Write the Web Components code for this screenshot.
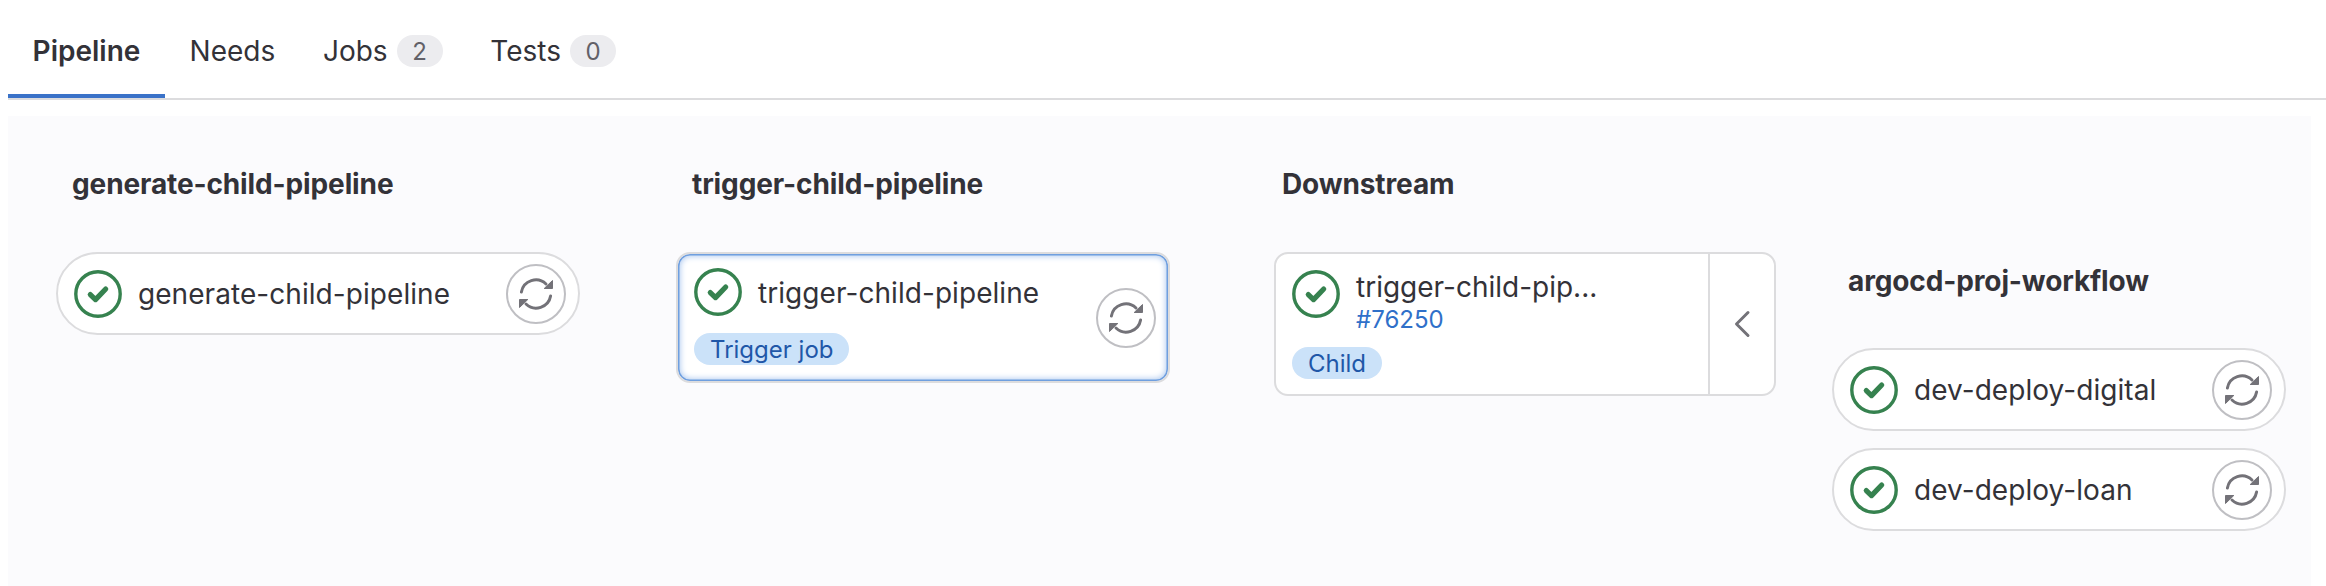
<!DOCTYPE html>
<html lang="en">
<head>
<meta charset="utf-8">
<title>Pipeline</title>
<style>
  html, body { margin: 0; background: #fff; }
  body { font-family: Inter, "Noto Sans", sans-serif; color: #333238; height: 586px; overflow: hidden; }
</style>
</head>
<body>
<pipeline-tabs>
  <tab-item active>Pipeline</tab-item>
  <tab-item>Needs</tab-item>
  <tab-item count="2">Jobs</tab-item>
  <tab-item count="0">Tests</tab-item>
</pipeline-tabs>
<pipeline-graph>
  <stage-column title="generate-child-pipeline" style="--col-width:524px">
    <job-pill>generate-child-pipeline</job-pill>
  </stage-column>
  <stage-column title="trigger-child-pipeline" style="--col-width:494px;--col-gap:96px">
    <trigger-card label="Trigger job">trigger-child-pipeline</trigger-card>
  </stage-column>
  <stage-column title="Downstream" style="--col-width:502px;--col-gap:104px;--title-indent:8px">
    <downstream-card pipeline="#76250" label="Child">trigger-child-pip...</downstream-card>
  </stage-column>
  <stage-column title="argocd-proj-workflow" style="--col-width:454px;--col-gap:56px;--col-top:97px;--title-gap:49px">
    <job-pill>dev-deploy-digital</job-pill>
    <job-pill>dev-deploy-loan</job-pill>
  </stage-column>
</pipeline-graph>

<script>
class PipelineTabs extends HTMLElement {
  constructor() {
    super();
    this.attachShadow({ mode: 'open' });
    this.shadowRoot.innerHTML = `
      <style>
        :host {
          display: flex;
          height: 98px;
          margin: 0 0 16px 8px;
          border-bottom: 2px solid #dcdcde;
        }
      </style>
      <slot></slot>
    `;
  }
}

class TabItem extends HTMLElement {
  constructor() {
    super();
    this.attachShadow({ mode: 'open' });
  }

  connectedCallback() {
    const count = this.getAttribute('count');
    this.shadowRoot.innerHTML = `
      <style>
        :host {
          display: flex;
          align-items: center;
          gap: 9px;
          box-sizing: border-box;
          height: 98px;
          padding: 4px 23.1px 0 24.6px;
          font-size: 28px;
          color: #333238;
        }
        :host([active]) {
          padding-right: 24.6px;
          font-weight: 600;
          box-shadow: inset 0 -4px 0 #3a72c8;
        }
        .count {
          display: flex;
          align-items: center;
          justify-content: center;
          width: 46px;
          height: 32px;
          border-radius: 16px;
          background: #ececef;
          color: #626168;
          font-size: 24px;
        }
      </style>
      <slot></slot>
      ${count !== null ? `<span class="count">${count}</span>` : ''}
    `;
  }
}

class PipelineGraph extends HTMLElement {
  constructor() {
    super();
    this.attachShadow({ mode: 'open' });
    this.shadowRoot.innerHTML = `
      <style>
        :host {
          display: flex;
          align-items: flex-start;
          box-sizing: border-box;
          height: 470px;
          margin: 0 15px 0 8px;
          padding: 50px 0 0 48px;
          background: #fbfbfd;
        }
      </style>
      <slot></slot>
    `;
  }
}

class StageColumn extends HTMLElement {
  constructor() {
    super();
    this.attachShadow({ mode: 'open' });
  }

  connectedCallback() {
    this.shadowRoot.innerHTML = `
      <style>
        :host {
          display: flex;
          flex-direction: column;
          flex: none;
          width: var(--col-width);
          margin-left: var(--col-gap, 0);
          margin-top: var(--col-top, 0);
        }
        h3 {
          margin: 0 0 var(--title-gap, 50px);
          padding-left: var(--title-indent, 16px);
          font-size: 28px;
          line-height: 36px;
          font-weight: 700;
          letter-spacing: -0.12px;
          color: #333238;
          white-space: nowrap;
        }
        .jobs { display: flex; flex-direction: column; gap: 17px; }
      </style>
      <h3>${this.getAttribute('title')}</h3>
      <div class="jobs"><slot></slot></div>
    `;
  }
}

class StatusIcon extends HTMLElement {
  constructor() {
    super();
    this.attachShadow({ mode: 'open' });
    this.shadowRoot.innerHTML = `
      <style>
        :host { display: block; flex: none; width: 48px; height: 48px; }
        svg { display: block; }
      </style>
      <svg width="48" height="48" viewBox="0 0 48 48" fill="none">
        <circle cx="24" cy="24" r="22.2" stroke="#36824f" stroke-width="3.4"/>
        <path d="M16.3 24.6l5.2 5 10.2-10.6" stroke="#36824f" stroke-width="5.2" stroke-linecap="round" stroke-linejoin="round"/>
      </svg>
    `;
  }
}

class RetryButton extends HTMLElement {
  constructor() {
    super();
    this.attachShadow({ mode: 'open' });
    this.shadowRoot.innerHTML = `
      <style>
        :host {
          display: flex;
          align-items: center;
          justify-content: center;
          flex: none;
          box-sizing: border-box;
          width: 60px;
          height: 60px;
          border: 2px solid #bfbfc3;
          border-radius: 50%;
          background: #fff;
        }
        svg { display: block; }
      </style>
      <svg width="36" height="36" viewBox="-18 -18 36 36" fill="#737278">
        <path d="M-14.6 -2A14.7 14.7 0 0 1 10 -10M14.6 2A14.7 14.7 0 0 1 -10 10" fill="none" stroke="#737278" stroke-width="3" stroke-linecap="round"/>
        <path d="M16.5 -13.5V-5.5H8.2ZM-16.5 13.5V5.5H-8.2Z" stroke="#737278" stroke-width="1" stroke-linejoin="round"/>
      </svg>
    `;
  }
}

class LabelBadge extends HTMLElement {
  constructor() {
    super();
    this.attachShadow({ mode: 'open' });
    this.shadowRoot.innerHTML = `
      <style>
        :host {
          display: inline-flex;
          align-items: center;
          align-self: flex-start;
          box-sizing: border-box;
          height: 32px;
          padding: 0 16px;
          border-radius: 16px;
          background: #cbe2f9;
          color: #1f57a8;
          font-size: 24px;
          white-space: nowrap;
        }
      </style>
      <slot></slot>
    `;
  }
}

class JobPill extends HTMLElement {
  constructor() {
    super();
    this.attachShadow({ mode: 'open' });
    this.shadowRoot.innerHTML = `
      <style>
        :host {
          display: flex;
          align-items: center;
          box-sizing: border-box;
          height: 83px;
          padding: 0 12px 0 16px;
          border: 2px solid #dcdcde;
          border-radius: 42px;
          background: #fff;
          font-size: 28px;
          letter-spacing: 0.06px;
          color: #333238;
        }
        .name { flex: 1; margin-left: 16px; white-space: nowrap; }
      </style>
      <status-icon></status-icon>
      <span class="name"><slot></slot></span>
      <retry-button></retry-button>
    `;
  }
}

class TriggerCard extends HTMLElement {
  constructor() {
    super();
    this.attachShadow({ mode: 'open' });
  }

  connectedCallback() {
    this.shadowRoot.innerHTML = `
      <style>
        :host {
          display: flex;
          align-items: flex-end;
          box-sizing: border-box;
          height: 131px;
          padding: 0 12px 33px 16px;
          border: 2px solid #dcdcde;
          border-radius: 14px;
          background: #fff;
          box-shadow: inset 0 0 0 1.5px #6f9fdf, inset 0 0 6px 2px #a9c6ee;
          font-size: 28px;
          letter-spacing: 0.06px;
          color: #333238;
        }
        .main { flex: 1; display: flex; flex-direction: column; gap: 17px; margin-bottom: -17px; }
        .top { display: flex; align-items: center; gap: 16px; white-space: nowrap; }
        .name { padding-top: 2px; }
        label-badge { letter-spacing: 0; }
      </style>
      <div class="main">
        <div class="top"><status-icon></status-icon><span class="name"><slot></slot></span></div>
        <label-badge>${this.getAttribute('label')}</label-badge>
      </div>
      <retry-button></retry-button>
    `;
  }
}

class DownstreamCard extends HTMLElement {
  constructor() {
    super();
    this.attachShadow({ mode: 'open' });
  }

  connectedCallback() {
    this.shadowRoot.innerHTML = `
      <style>
        :host {
          display: flex;
          box-sizing: border-box;
          height: 144px;
          border: 2px solid #dcdcde;
          border-radius: 14px;
          background: #fff;
          font-size: 28px;
          color: #333238;
        }
        .main {
          flex: 1;
          display: flex;
          flex-direction: column;
          gap: 11px;
          padding: 16px 16px 0;
        }
        .top { display: flex; align-items: flex-start; gap: 16px; white-space: nowrap; }
        .names { display: flex; flex-direction: column; }
        .title { line-height: 34px; }
        a { color: #2f70c9; font-size: 24px; line-height: 32px; text-decoration: none; }
        .toggle {
          display: flex;
          align-items: center;
          justify-content: center;
          width: 64px;
          border-left: 2px solid #dcdcde;
        }
        svg { display: block; }
      </style>
      <div class="main">
        <div class="top">
          <status-icon></status-icon>
          <div class="names">
            <span class="title"><slot></slot></span>
            <a href="#">${this.getAttribute('pipeline')}</a>
          </div>
        </div>
        <label-badge>${this.getAttribute('label')}</label-badge>
      </div>
      <div class="toggle">
        <svg width="18" height="28" viewBox="0 0 18 28" fill="none">
          <path d="M15 2.5L3.5 14 15 25.5" stroke="#737278" stroke-width="3" stroke-linecap="round" stroke-linejoin="round"/>
        </svg>
      </div>
    `;
  }
}

customElements.define('pipeline-tabs', PipelineTabs);
customElements.define('tab-item', TabItem);
customElements.define('pipeline-graph', PipelineGraph);
customElements.define('stage-column', StageColumn);
customElements.define('status-icon', StatusIcon);
customElements.define('retry-button', RetryButton);
customElements.define('label-badge', LabelBadge);
customElements.define('job-pill', JobPill);
customElements.define('trigger-card', TriggerCard);
customElements.define('downstream-card', DownstreamCard);
</script>
</body>
</html>
